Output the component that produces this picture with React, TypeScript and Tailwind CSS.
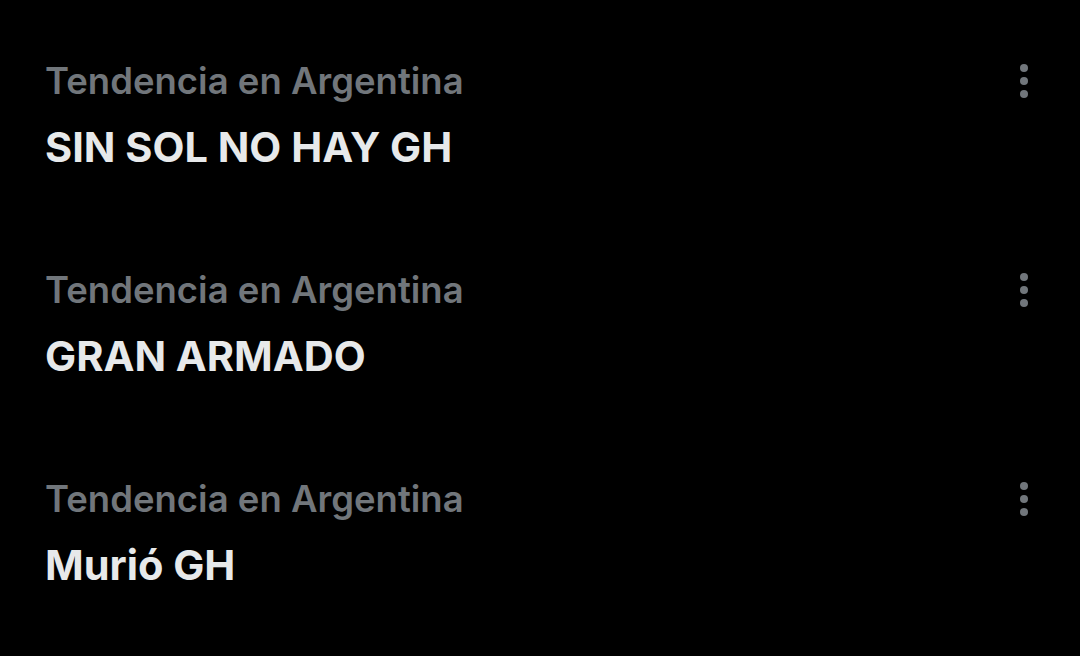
import React from "react";

interface Trend {
  context: string;
  title: string;
}

const trends: Trend[] = [
  { context: "Tendencia en Argentina", title: "SIN SOL NO HAY GH" },
  { context: "Tendencia en Argentina", title: "GRAN ARMADO" },
  { context: "Tendencia en Argentina", title: "Murió GH" },
];

const MoreIcon: React.FC = () => (
  <svg width="26" height="40" viewBox="0 0 26 40" className="text-[#71767b]">
    <circle cx="13" cy="7" r="4" fill="currentColor" />
    <circle cx="13" cy="20" r="4" fill="currentColor" />
    <circle cx="13" cy="33" r="4" fill="currentColor" />
  </svg>
);

const App: React.FC = () => {
  return (
    <div
      className="w-[1080px] h-[656px] bg-black overflow-hidden pt-[56px]"
      style={{ fontFamily: "Inter, 'Noto Sans', sans-serif" }}
    >
      {trends.map((trend, i) => (
        <div key={i} className="flex items-start justify-between pl-[45px] pr-[43px] h-[209px]">
          <div>
            <p className="text-[36.5px] leading-[50px] font-semibold text-[#71767b]">
              {trend.context}
            </p>
            <p className="text-[41.5px] leading-[50px] mt-[16px] font-bold text-[#e7e9ea]">
              {trend.title}
            </p>
          </div>
          <div className="mt-[5px]">
            <MoreIcon />
          </div>
        </div>
      ))}
    </div>
  );
};

export default App;
